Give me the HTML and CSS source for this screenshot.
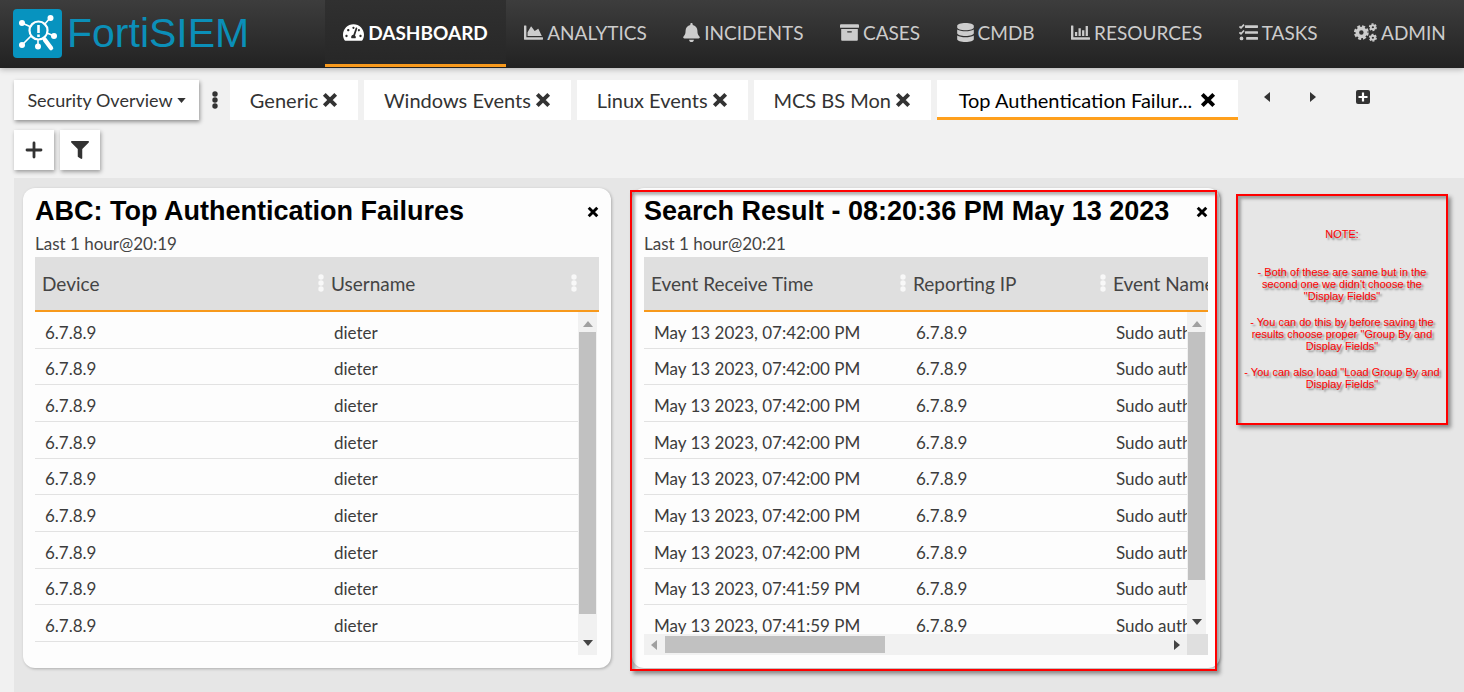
FILE: index.html
```html
<!DOCTYPE html>
<html lang="en">
<head>
<meta charset="utf-8">
<meta name="viewport" content="width=device-width, initial-scale=1">
<title>FortiSIEM</title>
<link rel="stylesheet" href="styles.css">
</head>
<body>
<svg class="sprite" aria-hidden="true">
  <symbol id="times" viewBox="0 0 14 14"><path d="M2 2l10 10M12 2L2 12" fill="none" stroke="currentColor" stroke-width="3.400"/></symbol>
  <symbol id="dots" viewBox="0 0 6 18"><circle cx="3" cy="3" r="2.700"/><circle cx="3" cy="9" r="2.700"/><circle cx="3" cy="15" r="2.700"/></symbol>
  <symbol id="up" viewBox="0 0 10 6"><path d="M0 6L5 0l5 6z"/></symbol>
  <symbol id="down" viewBox="0 0 10 6"><path d="M0 0h10L5 6z"/></symbol>
  <symbol id="left" viewBox="0 0 6 10"><path d="M6 0v10L0 5z"/></symbol>
  <symbol id="right" viewBox="0 0 6 10"><path d="M0 0v10l6-5z"/></symbol>
</svg>

<header class="header">
  <a class="brand" href="#">
    <svg class="brand-mark" viewBox="0 0 49 49" aria-hidden="true">
      <rect width="49" height="49" rx="4" fill="#0793bf"/>
      <g stroke="#fff" fill="none">
        <path stroke-width="1.600" d="M9 14l9 4M37 9l-6 7M9 36l9-9M25 31v6M34 24l7 3"/>
        <circle cx="25.500" cy="21.500" r="9" stroke-width="2.200"/>
        <path stroke-width="4.500" stroke-linecap="round" d="M32 31l6 8"/>
        <path stroke-width="2.600" d="M25.500 16v8M25.500 25.500v2.500"/>
      </g>
      <g fill="#fff"><circle cx="9" cy="14" r="3"/><circle cx="37.500" cy="9" r="3"/><circle cx="9" cy="36" r="3"/><circle cx="25" cy="37.500" r="3"/><circle cx="41" cy="27" r="3"/></g>
    </svg>
    <span>FortiSIEM</span>
  </a>
  <nav class="nav">
    <a class="nav-item active" href="#"><svg class="nav-icon wide" viewBox="0 0 576 512"><path d="M288 32C128.940 32 0 160.940 0 320c0 52.800 14.250 102.260 39.060 144.800 5.610 9.620 16.300 15.200 27.440 15.200h443c11.140 0 21.830-5.580 27.440-15.200C561.750 422.260 576 372.800 576 320c0-159.060-128.940-288-288-288zm0 64c14.710 0 26.580 10.130 30.320 23.650-1.110 2.260-2.640 4.230-3.450 6.670l-9.220 27.670c-5.130 3.490-10.970 6.010-17.640 6.010-17.670 0-32-14.330-32-32S270.330 96 288 96zM96 384c-17.670 0-32-14.330-32-32s14.330-32 32-32 32 14.330 32 32-14.330 32-32 32zm48-160c-17.670 0-32-14.330-32-32s14.330-32 32-32 32 14.330 32 32-14.330 32-32 32zm246.770-72.410l-61.330 184C343.130 347.330 352 364.540 352 384c0 11.720-3.380 22.550-8.880 32H232.880c-5.500-9.450-8.880-20.280-8.880-32 0-33.940 26.500-61.430 59.900-63.590l61.340-184.010c4.170-12.560 17.730-19.450 30.360-15.170 12.570 4.190 19.350 17.790 15.170 30.360zm14.660 57.200l15.520-46.550c3.470-1.290 7.130-2.230 11.050-2.230 17.670 0 32 14.330 32 32s-14.330 32-32 32c-11.380-.01-20.890-6.280-26.570-15.220zM480 384c-17.670 0-32-14.330-32-32s14.330-32 32-32 32 14.330 32 32-14.330 32-32 32z"/></svg>DASHBOARD</a>
    <a class="nav-item" href="#"><svg class="nav-icon" viewBox="0 0 512 512"><path d="M500 384c6.600 0 12 5.400 12 12v40c0 6.600-5.400 12-12 12H12c-6.600 0-12-5.400-12-12V76c0-6.600 5.400-12 12-12h40c6.600 0 12 5.400 12 12v308h436zM372.700 159.500L288 216l-85.300-113.700c-5.100-6.800-15.500-6.300-19.900 1L96 248v104h384l-89.900-187.800c-3.200-6.500-11.400-8.700-17.400-4.700z"/></svg>ANALYTICS</a>
    <a class="nav-item" href="#"><svg class="nav-icon slim" viewBox="0 0 448 512"><path d="M224 512c35.320 0 63.970-28.650 63.970-64H160.030c0 35.350 28.650 64 63.970 64zm215.390-149.710c-19.320-20.760-55.470-51.990-55.470-154.290 0-77.700-54.480-139.900-127.940-155.160V32c0-17.670-14.320-32-31.980-32s-31.980 14.330-31.980 32v20.840C118.560 68.100 64.080 130.300 64.080 208c0 102.300-36.150 133.530-55.470 154.290-6 6.450-8.660 14.160-8.610 21.710.11 16.400 12.980 32 32.100 32h383.800c19.120 0 32-15.600 32.100-32 .05-7.550-2.610-15.270-8.610-21.710z"/></svg>INCIDENTS</a>
    <a class="nav-item" href="#"><svg class="nav-icon" viewBox="0 0 512 512"><path d="M32 448c0 17.700 14.300 32 32 32h384c17.700 0 32-14.300 32-32V160H32v288zm160-212c0-6.600 5.400-12 12-12h104c6.600 0 12 5.400 12 12v8c0 6.600-5.400 12-12 12H204c-6.600 0-12-5.400-12-12v-8zM480 32H32C14.300 32 0 46.300 0 64v48c0 8.800 7.200 16 16 16h480c8.800 0 16-7.200 16-16V64c0-17.700-14.300-32-32-32z"/></svg>CASES</a>
    <a class="nav-item" href="#"><svg class="nav-icon slim" viewBox="0 0 448 512"><path d="M448 73.143v45.714C448 159.143 347.667 192 224 192S0 159.143 0 118.857V73.143C0 32.857 100.333 0 224 0s224 32.857 224 73.143zM448 176v102.857C448 319.143 347.667 352 224 352S0 319.143 0 278.857V176c48.125 33.143 136.208 48.572 224 48.572S399.874 209.143 448 176zm0 160v102.857C448 479.143 347.667 512 224 512S0 479.143 0 438.857V336c48.125 33.143 136.208 48.572 224 48.572S399.874 369.143 448 336z"/></svg>CMDB</a>
    <a class="nav-item" href="#"><svg class="nav-icon" viewBox="0 0 512 512"><path d="M12 64h40q12 0 12 12v308h436q12 0 12 12v40q0 12-12 12H12q-12 0-12-12V76q0-12 12-12zM106 240h62v112h-62zM202 144h62v208h-62zM298 192h62v160h-62zM394 80h62v272h-62z"/></svg>RESOURCES</a>
    <a class="nav-item" href="#"><svg class="nav-icon" viewBox="0 0 512 512"><path d="M176 60h320q16 0 16 16v40q0 16-16 16H176q-16 0-16-16V76q0-16 16-16zM176 220h320q16 0 16 16v40q0 16-16 16H176q-16 0-16-16v-40q0-16 16-16zM208 380h288q16 0 16 16v40q0 16-16 16H208q-16 0-16-16v-40q0-16 16-16z"/><circle cx="68" cy="416" r="50"/><path d="M12 92l42 38 82-88M12 252l42 38 82-88" fill="none" stroke="currentColor" stroke-width="48"/></svg>TASKS</a>
    <a class="nav-item" href="#"><svg class="nav-icon cogs" viewBox="0 0 640 512"><g fill="none" stroke="currentColor"><circle cx="205" cy="256" r="112" stroke-width="100"/><circle cx="205" cy="256" r="168" stroke-width="76" stroke-dasharray="80 51.900"/><circle cx="525" cy="110" r="58" stroke-width="54"/><circle cx="525" cy="110" r="90" stroke-width="44" stroke-dasharray="54 40.200"/><circle cx="525" cy="402" r="58" stroke-width="54"/><circle cx="525" cy="402" r="90" stroke-width="44" stroke-dasharray="54 40.200"/></g></svg>ADMIN</a>
  </nav>
</header>

<section class="toolbar">
  <div class="tab-row">
    <button class="picker" type="button">Security Overview<svg class="caret"><use href="#down"/></svg></button>
    <button class="plain more" type="button" aria-label="More"><svg><use href="#dots"/></svg></button>
    <div class="tabs">
      <div class="tab"><span>Generic</span><button class="plain close" type="button" aria-label="Close"><svg><use href="#times"/></svg></button></div>
      <div class="tab"><span>Windows Events</span><button class="plain close" type="button" aria-label="Close"><svg><use href="#times"/></svg></button></div>
      <div class="tab"><span>Linux Events</span><button class="plain close" type="button" aria-label="Close"><svg><use href="#times"/></svg></button></div>
      <div class="tab"><span>MCS BS Mon</span><button class="plain close" type="button" aria-label="Close"><svg><use href="#times"/></svg></button></div>
      <div class="tab current"><span>Top Authentication Failur...</span><button class="plain close" type="button" aria-label="Close"><svg><use href="#times"/></svg></button></div>
    </div>
    <div class="pager">
      <button class="plain" type="button" aria-label="Previous"><svg class="arrow"><use href="#left"/></svg></button>
      <button class="plain" type="button" aria-label="Next"><svg class="arrow"><use href="#right"/></svg></button>
      <button class="plain" type="button" aria-label="Add dashboard"><svg class="add" viewBox="0 0 14 14"><rect width="14" height="14" rx="2"/><path d="M7 2.500v9M2.500 7h9" stroke="#fff" stroke-width="2.200"/></svg></button>
    </div>
  </div>
  <div class="tools">
    <button class="tool" type="button" aria-label="Add widget"><svg viewBox="0 0 18 18"><path d="M9 2v14M2 9h14" stroke="currentColor" stroke-width="2.800" stroke-linecap="round"/></svg></button>
    <button class="tool" type="button" aria-label="Filter"><svg viewBox="0 0 512 512"><path d="M487.976 0H24.028C2.710 0-8.047 25.866 7.058 40.971L192 225.941V432c0 7.831 3.821 15.170 10.237 19.662l80 55.980C298.020 518.690 320 507.493 320 487.980V225.941l184.947-184.970C520.021 25.896 509.338 0 487.976 0z"/></svg></button>
  </div>
</section>

<main class="board">
  <div class="panels">
    <section class="panel">
      <div class="panel-head"><h2>ABC: Top Authentication Failures</h2><button class="plain panel-close" type="button" aria-label="Close"><svg><use href="#times"/></svg></button></div>
      <p class="range">Last 1 hour@20:19</p>
      <div class="grid">
        <table class="data short">
          <thead><tr><th>Device<svg class="grip"><use href="#dots"/></svg></th><th>Username<svg class="grip"><use href="#dots"/></svg></th></tr></thead>
          <tbody>
            <tr><td>6.7.8.9</td><td>dieter</td></tr>
            <tr><td>6.7.8.9</td><td>dieter</td></tr>
            <tr><td>6.7.8.9</td><td>dieter</td></tr>
            <tr><td>6.7.8.9</td><td>dieter</td></tr>
            <tr><td>6.7.8.9</td><td>dieter</td></tr>
            <tr><td>6.7.8.9</td><td>dieter</td></tr>
            <tr><td>6.7.8.9</td><td>dieter</td></tr>
            <tr><td>6.7.8.9</td><td>dieter</td></tr>
            <tr><td>6.7.8.9</td><td>dieter</td></tr>
          </tbody>
        </table>
        <div class="vbar"><svg class="tri faded"><use href="#up"/></svg><div class="track"><div class="thumb"></div></div><svg class="tri"><use href="#down"/></svg></div>
      </div>
    </section>
    <section class="panel">
      <div class="panel-head"><h2>Search Result - 08:20:36 PM May 13 2023</h2><button class="plain panel-close" type="button" aria-label="Close"><svg><use href="#times"/></svg></button></div>
      <p class="range">Last 1 hour@20:21</p>
      <div class="grid">
        <table class="data long">
          <thead><tr><th>Event Receive Time<svg class="grip"><use href="#dots"/></svg></th><th>Reporting IP<svg class="grip"><use href="#dots"/></svg></th><th>Event Name</th></tr></thead>
          <tbody>
            <tr><td>May 13 2023, 07:42:00 PM</td><td>6.7.8.9</td><td>Sudo auth</td></tr>
            <tr><td>May 13 2023, 07:42:00 PM</td><td>6.7.8.9</td><td>Sudo auth</td></tr>
            <tr><td>May 13 2023, 07:42:00 PM</td><td>6.7.8.9</td><td>Sudo auth</td></tr>
            <tr><td>May 13 2023, 07:42:00 PM</td><td>6.7.8.9</td><td>Sudo auth</td></tr>
            <tr><td>May 13 2023, 07:42:00 PM</td><td>6.7.8.9</td><td>Sudo auth</td></tr>
            <tr><td>May 13 2023, 07:42:00 PM</td><td>6.7.8.9</td><td>Sudo auth</td></tr>
            <tr><td>May 13 2023, 07:42:00 PM</td><td>6.7.8.9</td><td>Sudo auth</td></tr>
            <tr><td>May 13 2023, 07:41:59 PM</td><td>6.7.8.9</td><td>Sudo auth</td></tr>
            <tr><td>May 13 2023, 07:41:59 PM</td><td>6.7.8.9</td><td>Sudo auth</td></tr>
          </tbody>
        </table>
        <div class="vbar above"><svg class="tri faded"><use href="#up"/></svg><div class="track"><div class="thumb"></div></div><svg class="tri"><use href="#down"/></svg></div>
        <div class="hbar"><svg class="side faded"><use href="#left"/></svg><div class="track"><div class="thumb"></div></div><svg class="side"><use href="#right"/></svg></div>
      </div>
      <div class="marker"></div>
    </section>
  </div>
  <aside class="note">
    <p class="note-title">NOTE:</p>
    <p>- Both of these are same but in the second one we didn't choose the "Display Fields"</p>
    <p>- You can do this by before saving the results choose proper "Group By and Display Fields"</p>
    <p>- You can also load "Load Group By and Display Fields"</p>
  </aside>
</main>
</body>
</html>
```
FILE: styles.css
```css
* { box-sizing: border-box; }

body {
  margin: 0;
  min-height: 100vh;
  display: flex;
  flex-direction: column;
  background: #f1f1f1;
  color: #333;
  font-family: Lato, "Liberation Sans", sans-serif;
  font-size: 17px;
}

svg { fill: currentColor; display: block; flex: none; }
.sprite { position: absolute; width: 0; height: 0; }
button { font: inherit; color: inherit; border: 0; cursor: pointer; }
.plain { padding: 0; background: none; }

/* Header */
.header {
  display: flex;
  height: 68px;
  padding-left: 13px;
  background: linear-gradient(#3d3d3d, #222);
  box-shadow: 0 1px 6px rgba(0, 0, 0, .3);
}
.brand {
  display: flex;
  align-items: center;
  gap: 5px;
  width: 312px;
  padding-bottom: 2px;
  color: #0b8fb8;
  text-decoration: none;
  font: 41px/60px "Liberation Sans", Arial, sans-serif;
}
.brand-mark { width: 49px; height: 49px; }
.nav { display: flex; flex: 1; }
.nav-item {
  display: flex;
  flex: 1 1 auto;
  align-items: center;
  justify-content: center;
  gap: 4px;
  height: 67px;
  padding-bottom: 3px;
  color: #ccc;
  font-size: 19px;
  text-decoration: none;
}
.nav-item.active {
  color: #fff;
  font-weight: 700;
  background: linear-gradient(#303030, #272727);
  border-bottom: 3px solid #f7991c;
  padding-bottom: 0;
}
.nav-icon { width: 19px; height: 19px; }
.nav-icon.wide { width: 21px; }
.nav-icon.slim { width: 17px; }
.nav-icon.cogs { width: 23px; }

/* Toolbar */
.toolbar { padding: 12px 0 8px 14px; }
.tab-row { display: flex; align-items: flex-start; }
.picker {
  display: flex;
  align-items: center;
  justify-content: center;
  gap: 4px;
  width: 185px;
  height: 40px;
  padding: 0;
  background: #fff;
  font-size: 18px;
  box-shadow: 1px 2px 4px rgba(0, 0, 0, .4);
}
.caret { width: 9px; height: 5px; }
.more { width: 31px; height: 40px; display: grid; place-items: center; }
.more svg { width: 6px; height: 18px; }
.tabs { display: flex; flex: 1; gap: 6px; }
.tab {
  display: flex;
  flex: 1 1 auto;
  align-items: center;
  justify-content: center;
  gap: 4px;
  height: 40px;
  padding: 0 18px;
  background: #fff;
  font-size: 20px;
}
.tab.current { color: #000; border-bottom: 3px solid #ffa01c; padding: 3px 20px 0; gap: 8px; }
.close svg { width: 16px; height: 16px; }
.pager { display: flex; align-items: center; width: 226px; height: 34px; padding-left: 26px; gap: 40px; }
.arrow { width: 6px; height: 10px; }
.add { width: 14px; height: 14px; }
.tools { display: flex; gap: 6px; margin-top: 10px; }
.tool {
  display: grid;
  place-items: center;
  width: 40px;
  height: 40px;
  padding: 0;
  background: #fff;
  box-shadow: 1px 2px 4px rgba(0, 0, 0, .35);
}
.tool svg { width: 18px; height: 18px; }

/* Dashboard */
.board {
  display: flex;
  flex: 1;
  align-items: flex-start;
  gap: 16px;
  margin-left: 14px;
  padding: 10px 16px 24px 9px;
  background: #e6e6e6;
}
.panels { display: flex; flex: 1; gap: 21px; min-width: 0; }
.panel {
  position: relative;
  flex: 1;
  min-width: 0;
  padding: 8px 12px 13px;
  background: #fdfdfd;
  border-radius: 12px;
  box-shadow: 1px 1px 3px rgba(0, 0, 0, .25);
}
.panel-head { display: flex; align-items: center; height: 30px; }
.panel-head h2 {
  flex: 1;
  margin: 0;
  color: #000;
  font: 700 27px/30px "Liberation Sans", Arial, sans-serif;
  white-space: nowrap;
}
.panel-close { color: #000; padding-top: 2px; }
.panel-close svg { width: 12px; height: 12px; }
.range { margin: 8px 0 3px; color: #444; font-size: 17px; line-height: 20px; }
.grid { position: relative; overflow: hidden; }
.data {
  width: 100%;
  height: 385px;
  margin-bottom: 13px;
  border-collapse: separate;
  border-spacing: 0;
  table-layout: fixed;
}
.data.long { width: 700px; }
.data.short th:first-child { width: 289px; }
.data.long th:first-child { width: 262px; }
.data.long th:nth-child(2) { width: 200px; }
.data th {
  position: relative;
  height: 55px;
  padding: 0 7px;
  background: #dfdfdf;
  border-bottom: 2px solid #f7991c;
  color: #444;
  font-size: 19px;
  font-weight: 400;
  text-align: left;
  white-space: nowrap;
}
.data td {
  padding: 6px 10px 0;
  border-bottom: 1px solid #e2e2e2;
  color: #3c3c3c;
  font-size: 17px;
  line-height: 20px;
  white-space: nowrap;
}
.grip { position: absolute; right: 0; top: 17px; width: 6px; height: 18px; color: #f8f8f8; }
.short th:last-child .grip { right: 22px; }

/* Scroll bars */
.vbar {
  position: absolute;
  top: 55px;
  right: 0;
  bottom: 0;
  width: 21px;
  padding: 9px 2px;
  display: flex;
  flex-direction: column;
  align-items: center;
  gap: 5px;
  color: #444;
  background: #f1f1f1;
  border-right: 2px solid #fdfdfd;
}
.vbar.above { bottom: 21px; }
.track { flex: 1; }
.vbar .track { width: 17px; }
.vbar .thumb { height: 93%; background: #c1c1c1; }
.vbar.above .thumb { height: 88%; }
.tri { width: 10px; height: 6px; }
.side { width: 6px; height: 10px; }
.faded { color: #a0a0a0; }
.hbar {
  position: absolute;
  left: 0;
  right: 0;
  bottom: 0;
  height: 21px;
  padding: 0 7px;
  display: flex;
  align-items: center;
  gap: 8px;
  color: #444;
  background: #f1f1f1;
  border-right: 21px solid #dfdfdf;
}
.hbar .thumb { width: 44%; height: 17px; background: #c1c1c1; }

/* Annotations */
.marker, .note { border: 2px solid #f00; box-shadow: 3px 3px 4px rgba(0, 0, 0, .4), inset 3px 3px 3px rgba(0, 0, 0, .3); }
.marker { position: absolute; top: 2px; right: 3px; bottom: -3px; left: -2px; pointer-events: none; }
.note {
  width: 212px;
  margin-top: 6px;
  padding: 32px 4px 19px;
  color: #f00;
  font: 11px/12px "Liberation Sans", Arial, sans-serif;
  text-align: center;
  text-shadow: 2px 2px 2px rgba(0, 0, 0, .45);
}
.note p { margin: 0 0 14px; }
.note .note-title { margin-bottom: 26px; }
```
